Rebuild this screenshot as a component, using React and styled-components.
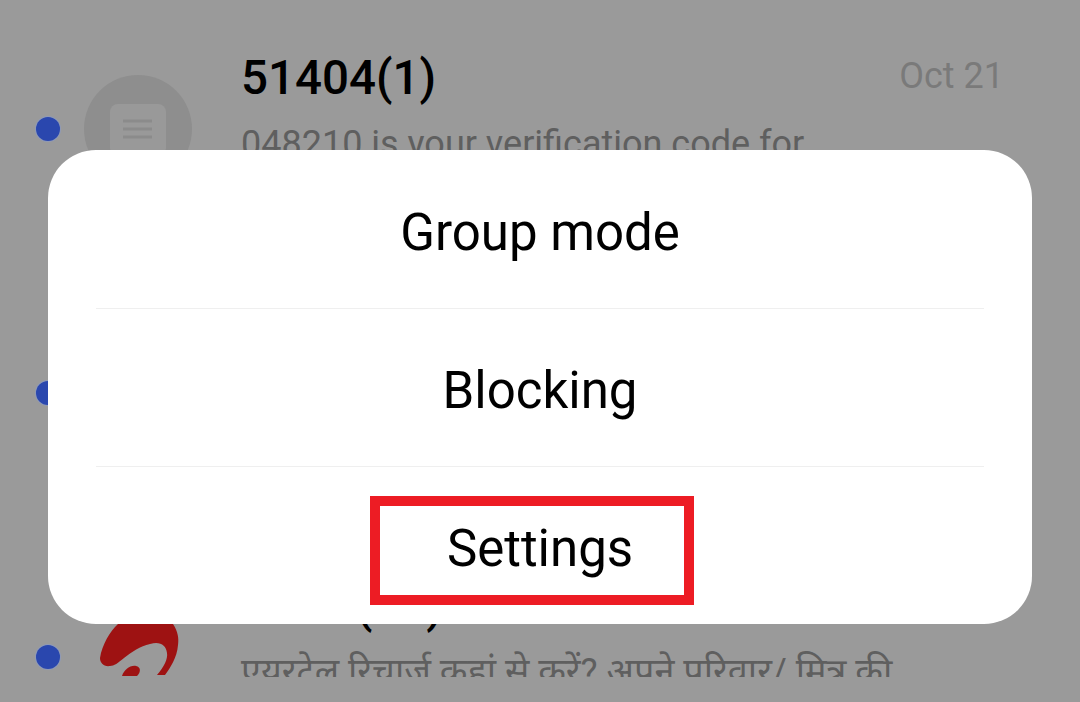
import styled, { createGlobalStyle } from 'styled-components';

const threads = [
  {
    id: 1,
    title: '51404(1)',
    date: 'Oct 21',
    text: '048210 is your verification code for',
    avatar: 'message',
  },
  { id: 2, avatar: 'message' },
  {
    id: 3,
    title: 'Airtel(11)',
    text: 'एयरटेल रिचार्ज कहां से करें? अपने परिवार/ मित्र की',
    avatar: 'airtel',
  },
];

const MessageAvatar = () => (
  <svg width="108" height="108" viewBox="0 0 108 108">
    <circle cx="54" cy="54" r="54" fill="#8e8e8e" />
    <rect x="26" y="29" width="56" height="52" rx="8" fill="#999999" />
    <path d="M39 46h29M39 54h29M39 62h29" stroke="#8b8b8b" strokeWidth="3" />
  </svg>
);

const AirtelLogo = () => (
  <svg width="108" height="108" viewBox="0 0 108 108">
    <path
      d="M16 55C18 42 26 28 34 21C50 8 85 8 89 21C94 28 95 36 94 42C93 55 86 65 81 72L73 72C80 64 84 56 83 50C82 42 76 38 66 41C56 43 48 49 40 55C34 60 30 63 26 63C20 64 16 60 16 55Z"
      fill="#9e1212"
    />
    <path d="M38 73C40 67 46 62 52 63C57 64 57 69 53 73Z" fill="#9e1212" />
  </svg>
);

export default function App() {
  return (
    <Page>
      <GlobalStyle />
      <ThreadList>
        {threads.map((thread) => (
          <Thread key={thread.id}>
            <Dot />
            <AvatarSlot>
              {thread.avatar === 'airtel' ? <AirtelLogo /> : <MessageAvatar />}
            </AvatarSlot>
            <ThreadBody>
              <ThreadHead>
                <ThreadTitle>{thread.title}</ThreadTitle>
                <ThreadDate>{thread.date}</ThreadDate>
              </ThreadHead>
              <ThreadText>{thread.text}</ThreadText>
            </ThreadBody>
          </Thread>
        ))}
      </ThreadList>

      <Menu>
        <MenuItem>
          <MenuLabel>Group mode</MenuLabel>
        </MenuItem>
        <MenuItem>
          <MenuLabel>Blocking</MenuLabel>
        </MenuItem>
        <MenuItem last>
          <Highlight>Settings</Highlight>
        </MenuItem>
      </Menu>
    </Page>
  );
}

const GlobalStyle = createGlobalStyle`
  html, body {
    margin: 0;
    padding: 0;
    background: #9a9a9a;
  }
`;

const Page = styled.div`
  position: relative;
  width: 1080px;
  height: 702px;
  overflow: hidden;
  background: #9a9a9a;
  font-family: Roboto, "Noto Sans", "Liberation Sans", sans-serif;
`;

const ThreadList = styled.div`
  height: 677px;
  overflow: hidden;
`;

const Thread = styled.div`
  display: flex;
  align-items: flex-start;
  box-sizing: border-box;
  height: 264px;
  padding: 50px 76px 0 36px;
`;

const Dot = styled.span`
  flex: none;
  width: 24px;
  height: 24px;
  margin-top: 67px;
  border-radius: 50%;
  background: #2a47ae;
  box-shadow: 0 0 0 1px #8f9ab8;
`;

const AvatarSlot = styled.div`
  flex: none;
  width: 108px;
  height: 108px;
  margin: 25px 49px 0 24px;

  svg {
    display: block;
  }
`;

const ThreadBody = styled.div`
  flex: 1;
  min-width: 0;
`;

const ThreadHead = styled.div`
  display: flex;
  justify-content: space-between;
  align-items: flex-start;
  height: 56px;
  margin-bottom: 18px;
`;

const ThreadTitle = styled.div`
  color: #000000;
  font-size: 47.5px;
  font-weight: 500;
  line-height: 56px;
`;

const ThreadDate = styled.div`
  color: #7a7a7a;
  font-size: 36px;
  line-height: 52px;
`;

const ThreadText = styled.div`
  color: #5f5f5f;
  font-size: 36px;
  line-height: 40px;
  white-space: nowrap;
`;

const Menu = styled.div`
  position: absolute;
  top: 150px;
  left: 48px;
  box-sizing: border-box;
  width: 984px;
  height: 474px;
  padding-top: 1px;
  border-radius: 48px;
  background: #ffffff;
`;

const MenuItem = styled.div`
  display: flex;
  justify-content: center;
  align-items: center;
  box-sizing: border-box;
  height: ${({ last }) => (last ? '157px' : '158px')};
  margin: 0 48px;
  border-bottom: ${({ last }) => (last ? 'none' : '1px solid #efefef')};
  color: #000000;
  font-size: 51px;
`;

const MenuLabel = styled.span`
  margin-top: 6px;
`;

const Highlight = styled.div`
  display: flex;
  justify-content: center;
  align-items: center;
  box-sizing: border-box;
  width: 324px;
  height: 109px;
  margin: 10px 16px 0 0;
  padding: 0 0 4px 16px;
  border: 10px solid #ed1c24;
`;
